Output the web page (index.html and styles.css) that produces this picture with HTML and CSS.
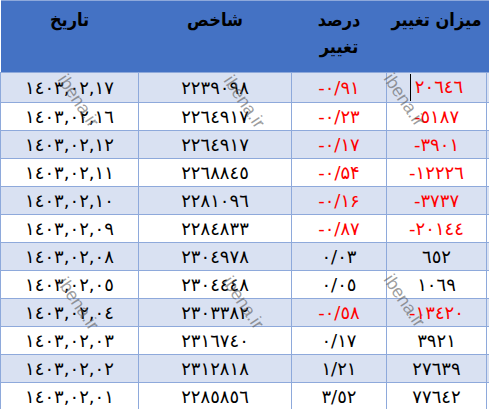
FILE: index.html
```html
<!DOCTYPE html>
<html lang="fa">
<head>
<meta charset="utf-8">
<link rel="stylesheet" href="styles.css">
</head>
<body>
<div class="sheet">
<table class="grid">
<colgroup><col class="c-date"><col class="c-idx"><col class="c-pct"><col class="c-chg"><col class="c-x"></colgroup>
<thead>
<tr><th>تاریخ</th><th>شاخص</th><th>درصد<br>تغییر</th><th>میزان تغییر</th><th></th></tr>
</thead>
<tbody>
<tr class="odd"><td>١٤٠٣,٠٢,١٧</td><td>٢٢٣٩٠٩٨</td><td class="neg">-٠/٩١</td><td class="neg"><span class="cursor"></span>٢٠٦٤٦</td><td></td></tr>
<tr><td>١٤٠٣,٠٢,١٦</td><td>٢٢٦٤٩١٧</td><td class="neg">-٠/٢٣</td><td class="neg">-٥١٨٧</td><td></td></tr>
<tr class="odd"><td>١٤٠٣,٠٢,١٢</td><td>٢٢٦٤٩١٧</td><td class="neg">-٠/١٧</td><td class="neg">-٣٩٠١</td><td></td></tr>
<tr><td>١٤٠٣,٠٢,١١</td><td>٢٢٦٨٨٤٥</td><td class="neg">-٠/۵۴</td><td class="neg">-١٢٢٢٦</td><td></td></tr>
<tr class="odd"><td>١٤٠٣,٠٢,١٠</td><td>٢٢٨١٠٩٦</td><td class="neg">-٠/١۶</td><td class="neg">-٣٧٣٧</td><td></td></tr>
<tr><td>١٤٠٣,٠٢,٠٩</td><td>٢٢٨٤٨٣٣</td><td class="neg">-٠/٨٧</td><td class="neg">-٢٠١٤٤</td><td></td></tr>
<tr class="odd"><td>١٤٠٣,٠٢,٠٨</td><td>٢٣٠٤٩٧٨</td><td>٠/٠٣</td><td>٦٥٢</td><td></td></tr>
<tr><td>١٤٠٣,٠٢,٠٥</td><td>٢٣٠٤٤٤٨</td><td>٠/٠٥</td><td>١٠٦٩</td><td></td></tr>
<tr class="odd"><td>١٤٠٣,٠٢,٠٤</td><td>٢٣٠٣٣٨٢</td><td class="neg">-٠/٥٨</td><td class="neg">-١٣٤٢٠</td><td></td></tr>
<tr><td>١٤٠٣,٠٢,٠٣</td><td>٢٣١٦٧٤٠</td><td>٠/١٧</td><td>٣٩٢١</td><td></td></tr>
<tr class="odd"><td>١٤٠٣,٠٢,٠٢</td><td>٢٣١٢٨١٨</td><td>١/٢١</td><td>٢٧٦٣٩</td><td></td></tr>
<tr><td>١٤٠٣,٠٢,٠١</td><td>٢٢٨٥٨٥٦</td><td>٣/٥٢</td><td>٧٧٦٤٢</td><td></td></tr>
</tbody>
</table>
<div class="wm w1">ibena.ir</div>
<div class="wm w2">ibena.ir</div>
<div class="wm w3">ibena.ir</div>
<div class="wm w4">ibena.ir</div>
<div class="wm w5">ibena.ir</div>
<div class="wm w6">ibena.ir</div>
</div>
</body>
</html>
```
FILE: styles.css
```css
html, body {
  margin: 0;
  padding: 0;
  background: #fff;
}
.sheet {
  position: relative;
  width: 489px;
  height: 409px;
  overflow: hidden;
}
.grid {
  border-collapse: collapse;
  table-layout: fixed;
  width: 500px;
  font-family: "DejaVu Sans", sans-serif;
  direction: ltr;
}
.c-date { width: 138px; }
.c-idx { width: 153px; }
.c-pct { width: 95px; }
.c-chg { width: 100px; }
.c-x { width: 14px; }
.grid th {
  background: #4472C4;
  height: 66px;
  padding: 5px 0 0;
  vertical-align: top;
  font-family: "DejaVu Sans Condensed", "DejaVu Sans", sans-serif;
  font-stretch: condensed;
  font-size: 18px;
  line-height: 27px;
  font-weight: bold;
  color: #000;
  text-align: center;
  white-space: nowrap;
  border-top: 1px solid #8EA9DB;
}
.grid td {
  height: 27px;
  padding: 0;
  text-align: center;
  font-size: 18px;
  line-height: 27px;
  color: #000;
  border: 1px solid #8EA9DB;
  position: relative;
  white-space: nowrap;
}
.grid tr.odd td { background: #D9E1F2; }
.grid td.neg { color: #FF0000; }
.cursor {
  display: inline-block;
  width: 1px;
  height: 27px;
  background: #000;
  vertical-align: middle;
  margin-right: 4px;
  position: relative;
  top: -1px;
}
.wm {
  position: absolute;
  font-family: "Liberation Sans", sans-serif;
  font-size: 18px;
  color: rgba(90, 90, 90, 0.6);
  transform: translate(-50%, -50%) rotate(56deg);
  white-space: nowrap;
}
.w1 { left: 78px; top: 101px; }
.w2 { left: 244px; top: 102px; }
.w3 { left: 404px; top: 100px; }
.w4 { left: 78px; top: 304px; }
.w5 { left: 243px; top: 303px; }
.w6 { left: 404px; top: 301px; }
```
